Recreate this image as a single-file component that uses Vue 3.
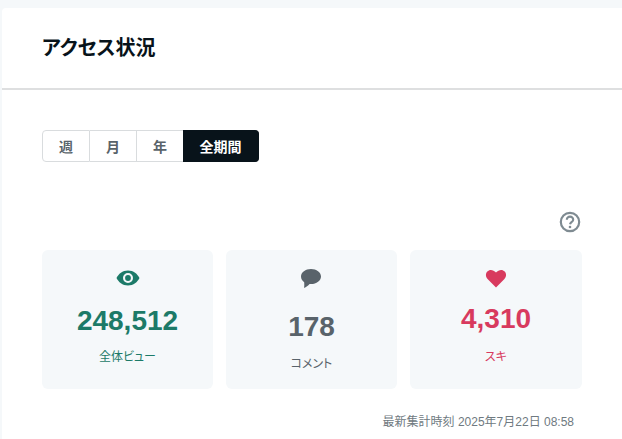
<script setup>
const tabs = [
  { label: '週', active: false },
  { label: '月', active: false },
  { label: '年', active: false },
  { label: '全期間', active: true },
]

const stats = [
  { key: 'view', value: '248,512', label: '全体ビュー' },
  { key: 'comment', value: '178', label: 'コメント' },
  { key: 'like', value: '4,310', label: 'スキ' },
]
</script>

<template>
  <div class="page">
    <section class="panel">
      <header class="panel-head">
        <h1>アクセス状況</h1>
      </header>
      <div class="panel-body">
        <div class="tabs">
          <button v-for="tab in tabs" :key="tab.label" class="tab" :class="{ active: tab.active }">
            {{ tab.label }}
          </button>
        </div>

        <div class="help-row">
          <svg class="help" viewBox="0 0 22 22" width="22" height="22" fill="none">
            <circle cx="11" cy="11" r="9.2" stroke="#7f8b92" stroke-width="2.2" />
            <path d="M7.8 8.700a3.200 3.100 0 0 1 6.400 0c0 2.100-2.700 2.200-3.200 4.500" stroke="#7f8b92" stroke-width="2.100" />
            <circle cx="11" cy="16" r="1.300" fill="#7f8b92" />
          </svg>
        </div>

        <div class="stats">
          <div v-for="stat in stats" :key="stat.key" class="stat" :class="stat.key">
            <svg v-if="stat.key === 'view'" class="icon" viewBox="0 0 24 16" width="24" height="16">
              <path fill-rule="evenodd" fill="#1c7a68" d="M12 .5C6.500.5 2.500 4 .5 8c2 4 6 7.500 11.500 7.500S21.500 12 23.500 8c-2-4-6-7.500-11.500-7.500zM12 3a5 5 0 1 1 0 10 5 5 0 0 1 0-10z" />
              <circle cx="12" cy="8" r="2.900" fill="#1c7a68" />
            </svg>
            <svg v-else-if="stat.key === 'comment'" class="icon" viewBox="0 0 20 19" width="20" height="19">
              <path fill="#59636a" d="M10 0C4.500 0 0 3.300 0 7.500c0 2.400 1.300 4.300 3.200 5.700.2 1.900.1 3.900-.1 5.800 2-1 4-2.300 5.500-4 .5.100.9.100 1.400.1 5.500 0 10-3.400 10-7.600S15.500 0 10 0z" />
            </svg>
            <svg v-else class="icon" viewBox="0 0 22 20" width="22" height="20">
              <path fill="#d83a5e" d="M11 19.500 2.800 11.300C.4 8.900.4 5.600 2.300 3.500c2.200-2.400 6-2.100 8.700 1.100 2.700-3.200 6.500-3.500 8.700-1.100 1.900 2.100 1.900 5.400-.5 7.800z" />
            </svg>
            <div class="value">{{ stat.value }}</div>
            <div class="label">{{ stat.label }}</div>
          </div>
        </div>

        <p class="updated">最新集計時刻 2025年7月22日 08:58</p>
      </div>
    </section>
  </div>
</template>

<style>
html,
body {
  margin: 0;
  background: #f5f8fa;
  overflow: hidden;
}
</style>

<style scoped>
.page {
  height: 439px;
  padding: 8px 0 0 2px;
  box-sizing: border-box;
  font-family: "Liberation Sans", "Noto Sans CJK JP", sans-serif;
  font-feature-settings: "palt";
}

.panel {
  background: #fff;
  border-top-left-radius: 4px;
  height: 431px;
  overflow: hidden;
}

.panel-head {
  height: 82px;
  box-sizing: border-box;
  border-bottom: 2px solid #dedfe0;
  padding-left: 40px;
  display: flex;
  align-items: center;
}

h1 {
  margin: 0;
  font-size: 20px;
  font-weight: 700;
  color: #08131a;
  line-height: 1;
}

.panel-body {
  padding: 40px 40px 0;
}

.tabs {
  display: flex;
}

.tab {
  height: 32px;
  width: 47px;
  padding: 0;
  border: 1px solid #d9dcde;
  border-left-width: 0;
  background: #fff;
  color: #59636a;
  font-family: inherit;
  font-feature-settings: inherit;
  font-size: 14px;
  font-weight: 700;
}

.tab:first-child {
  width: 48px;
  border-left-width: 1px;
  border-radius: 4px 0 0 4px;
}

.tab.active {
  width: 76px;
  margin-left: -1px;
  background: #08131a;
  border-color: #08131a;
  color: #fff;
  border-radius: 0 4px 4px 0;
}

.help-row {
  display: flex;
  justify-content: flex-end;
  margin-top: 49px;
  padding-right: 1px;
}

.help {
  display: block;
}

.stats {
  display: grid;
  grid-template-columns: 171px 171px 172px;
  gap: 13px;
  margin-top: 17px;
}

.stat {
  height: 139px;
  background: #f5f8fa;
  border-radius: 6px;
  display: flex;
  flex-direction: column;
  align-items: center;
}

.icon {
  display: block;
  margin-top: 20px;
}

.value {
  font-size: 28px;
  font-weight: 700;
  line-height: 32px;
  margin-top: 19px;
}

.label {
  font-size: 12px;
  line-height: 16px;
  margin-top: 12px;
}

.view .value,
.view .label {
  color: #1c7a68;
}

.comment .icon {
  margin-top: 19px;
  margin-right: 1px;
}

.comment .value,
.comment .label {
  color: #59636a;
}

.comment .value {
  margin-top: 23px;
}

.comment .label {
  margin-top: 13px;
}

.like .value,
.like .label {
  color: #d83a5e;
}

.like .icon {
  margin-top: 18px;
}

.like .value {
  margin-top: 15px;
}

.like .label {
  margin-top: 14px;
}

.updated {
  margin: 25px 8px 0 0;
  text-align: right;
  font-size: 12px;
  line-height: 16px;
  color: #6f7a81;
}
</style>
